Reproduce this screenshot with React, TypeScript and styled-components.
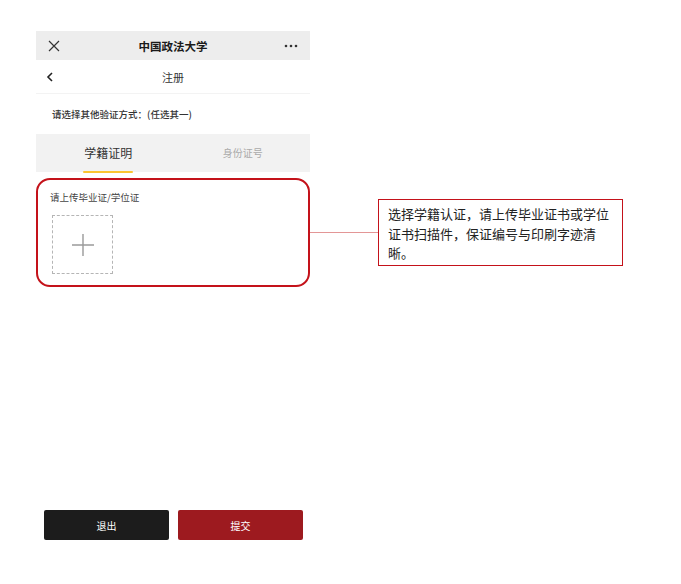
import * as React from 'react'
import styled, { createGlobalStyle } from 'styled-components'

const GlobalStyle = createGlobalStyle`
  html, body {
    margin: 0;
    padding: 0;
    background: #ffffff;
  }
  body {
    font-family: "Noto Sans CJK SC", "Noto Sans", "Liberation Sans", sans-serif;
    color: #222;
  }
`

const Page = styled.div`
  width: 681px;
  height: 584px;
  padding: 31px 0 0 36px;
  box-sizing: border-box;
  display: flex;
  flex-direction: column;
`

const Phone = styled.div`
  width: 274px;
  height: 509px;
  display: flex;
  flex-direction: column;
`

const TitleBar = styled.div`
  height: 29px;
  background: #ededed;
  display: flex;
  align-items: center;
  justify-content: space-between;
  padding: 0 12px 0 12px;
  position: relative;
`

const Title = styled.div`
  position: absolute;
  left: 0;
  right: 0;
  text-align: center;
  font-size: 11.5px;
  font-weight: 700;
  color: #1a1a1a;
  pointer-events: none;
`

const NavBar = styled.div`
  height: 33px;
  border-bottom: 1px solid #f3f3f3;
  display: flex;
  align-items: center;
  padding: 0 10px;
  position: relative;
`

const NavTitle = styled.div`
  position: absolute;
  left: 0;
  right: 0;
  text-align: center;
  font-size: 11px;
  color: #333;
`

const Hint = styled.div`
  height: 40px;
  display: flex;
  align-items: center;
  padding-left: 16px;
  font-size: 9.5px;
  font-weight: 500;
  color: #333;
`

const Tabs = styled.div`
  height: 38px;
  background: #f2f2f2;
  display: grid;
  grid-template-columns: 1fr 1fr;
  padding-left: 5px;
`

const Tab = styled.div<{ $active?: boolean }>`
  display: flex;
  align-items: center;
  justify-content: center;
  font-size: ${p => (p.$active ? '12px' : '10px')};
  color: ${p => (p.$active ? '#333' : '#aaa')};
  position: relative;
`

const TabLabel = styled.span<{ $active?: boolean }>`
  position: relative;
  padding: 0 0 1px;
  &::after {
    content: '';
    display: ${p => (p.$active ? 'block' : 'none')};
    position: absolute;
    left: -1px;
    right: -1px;
    bottom: -11px;
    height: 2.5px;
    border-radius: 1px;
    background: #fbc531;
  }
`

const UploadRow = styled.div`
  margin-top: 6px;
  display: flex;
  align-items: center;
  width: 600px;
`

const UploadCard = styled.div`
  width: 274px;
  height: 109px;
  box-sizing: border-box;
  border: 2px solid #c4121a;
  border-radius: 14px;
  padding: 10px 0 0 12px;
  flex-shrink: 0;
`

const UploadLabel = styled.div`
  font-size: 9.5px;
  color: #444;
  line-height: 14px;
`

const UploadBox = styled.div`
  margin: 11px 0 0 2px;
  width: 61px;
  height: 59px;
  box-sizing: border-box;
  border: 1px dashed #b5b5b5;
  display: flex;
  align-items: center;
  justify-content: center;
`

const Connector = styled.div`
  width: 68px;
  height: 1px;
  background: #e39696;
  flex-shrink: 0;
`

const Callout = styled.div`
  width: 245px;
  height: 67px;
  box-sizing: border-box;
  border: 1px solid #c4121a;
  padding: 4px 12px 0 9px;
  font-size: 13px;
  line-height: 19.5px;
  color: #222;
  flex-shrink: 0;
`

const Buttons = styled.div`
  margin-top: auto;
  display: flex;
  gap: 9px;
  padding-left: 8px;
`

const Button = styled.button<{ $primary?: boolean }>`
  width: 125px;
  height: 30px;
  border: none;
  border-radius: 2px;
  background: ${p => (p.$primary ? '#9d1a1f' : '#1c1c1c')};
  color: #fff;
  font-family: inherit;
  font-size: 10px;
  padding: 0;
`

const CloseIcon = () => (
  <svg width="12" height="12" viewBox="0 0 12 12">
    <path d="M1 1 L11 11 M11 1 L1 11" stroke="#333" strokeWidth="1.2" fill="none" />
  </svg>
)

const MoreIcon = () => (
  <svg width="14" height="4" viewBox="0 0 14 4">
    <circle cx="2" cy="2" r="1.3" fill="#333" />
    <circle cx="7" cy="2" r="1.3" fill="#333" />
    <circle cx="12" cy="2" r="1.3" fill="#333" />
  </svg>
)

const BackIcon = () => (
  <svg width="8" height="10" viewBox="0 0 8 10">
    <path d="M6 1 L2 5 L6 9" stroke="#222" strokeWidth="1.6" fill="none" />
  </svg>
)

const PlusIcon = () => (
  <svg width="24" height="24" viewBox="0 0 24 24">
    <path d="M12 1 V23 M1 12 H23" stroke="#9a9a9a" strokeWidth="1.4" fill="none" />
  </svg>
)

export default function App() {
  return (
    <Page>
      <GlobalStyle />
      <Phone>
        <TitleBar>
          <CloseIcon />
          <Title>中国政法大学</Title>
          <MoreIcon />
        </TitleBar>
        <NavBar>
          <BackIcon />
          <NavTitle>注册</NavTitle>
        </NavBar>
        <Hint>请选择其他验证方式：(任选其一)</Hint>
        <Tabs>
          <Tab $active>
            <TabLabel $active>学籍证明</TabLabel>
          </Tab>
          <Tab>
            <TabLabel>身份证号</TabLabel>
          </Tab>
        </Tabs>
        <UploadRow>
          <UploadCard>
            <UploadLabel>请上传毕业证/学位证</UploadLabel>
            <UploadBox>
              <PlusIcon />
            </UploadBox>
          </UploadCard>
          <Connector />
          <Callout>选择学籍认证，请上传毕业证书或学位证书扫描件，保证编号与印刷字迹清晰。</Callout>
        </UploadRow>
        <Buttons>
          <Button>退出</Button>
          <Button $primary>提交</Button>
        </Buttons>
      </Phone>
    </Page>
  )
}
